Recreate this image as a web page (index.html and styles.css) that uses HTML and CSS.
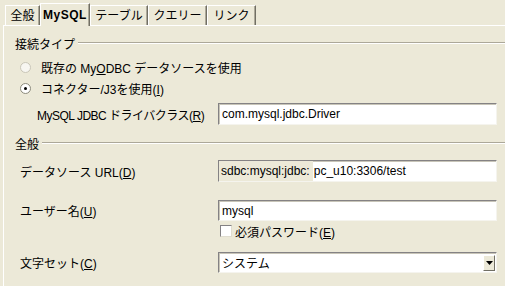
FILE: index.html
```html
<!DOCTYPE html>
<html lang="ja">
<head>
    <meta charset="UTF-8">
    <title>MySQL</title>
    <link rel="stylesheet" href="styles.css">
</head>
<body>

<div class="tabs">
    <div class="tab tab-general">全般</div>
    <div class="tab tab-mysql active">MySQL</div>
    <div class="tab tab-table">テーブル</div>
    <div class="tab tab-query">クエリー</div>
    <div class="tab tab-link">リンク</div>
</div>

<div class="panel">
    <div class="group-title first"><span>接続タイプ</span><div class="rule"></div></div>

    <div class="radio-row first-radio">
        <span class="radio off"></span>
        <span>既存の My<u>O</u>DBC データソースを使用</span>
    </div>
    <div class="radio-row">
        <span class="radio on"></span>
        <span>コネクター/J3を使用(<u>I</u>)</span>
    </div>

    <div class="field-row driver-row">
        <label class="label indent">MySQL JDBC ドライバクラス(<u>R</u>)</label>
        <div class="textbox">com.mysql.jdbc.Driver</div>
    </div>

    <div class="group-title second"><span>全般</span><div class="rule"></div></div>

    <div class="field-row url-row">
        <label class="label">データソース URL(<u>D</u>)</label>
        <div class="textbox url"><span class="prefix">sdbc:mysql:jdbc:</span><span class="rest">pc_u10:3306/test</span></div>
    </div>

    <div class="field-row user-row">
        <label class="label">ユーザー名(<u>U</u>)</label>
        <div class="textbox">mysql</div>
    </div>
    <div class="check-row">
        <span class="checkbox"></span>
        <span>必須パスワード(<u>E</u>)</span>
    </div>

    <div class="field-row charset-row">
        <label class="label">文字セット(<u>C</u>)</label>
        <div class="textbox select">
            <span class="value">システム</span>
            <span class="drop"><svg width="7" height="4" viewBox="0 0 7 4"><path d="M0 0h7L3.5 4z" fill="#000"/></svg></span>
        </div>
    </div>
</div>

</body>
</html>
```

FILE: styles.css
```css
body {
    margin: 0;
    background: #ece9d8;
    font-family: "Liberation Sans", "Noto Sans CJK JP", sans-serif;
    font-size: 12px;
    color: #000;
    overflow: hidden;
}
u {
    text-decoration: underline;
}

.tabs {
    display: flex;
    align-items: flex-end;
    height: 25px;
    padding-left: 5px;
}
.tab {
    height: 20px;
    line-height: 20px;
    text-align: center;
    white-space: nowrap;
    border-top: 1px solid #fff;
    border-left: 1px solid #fff;
    border-right: 1px solid #716f64;
    box-shadow: inset -1px 0 #aca899;
    box-sizing: border-box;
}
.tab-general { width: 35px; }
.tab-mysql { width: 50px; }
.tab-table { width: 58px; }
.tab-query { width: 59px; }
.tab-link { width: 49px; }
.tab.active {
    height: 23px;
    line-height: 22px;
    font-weight: bold;
    background: #ece9d8;
    margin-bottom: -1px;
    position: relative;
    z-index: 1;
    letter-spacing: 0.5px;
}

.panel {
    margin-left: 3px;
    border-top: 1px solid #fff;
    border-left: 1px solid #fff;
    padding: 9px 0 20px 11px;
}

.group-title {
    display: flex;
    align-items: center;
    height: 16px;
}
.group-title span {
    padding-right: 3px;
}
.group-title .rule {
    flex: 1;
    border-top: 1px solid #aca899;
    border-bottom: 1px solid #fff;
}
.group-title.second {
    margin-top: 10px;
}

.radio-row {
    display: flex;
    align-items: center;
    height: 20px;
    padding-left: 5px;
}
.radio-row.first-radio {
    margin-top: 6px;
    margin-bottom: 1px;
}
.radio {
    width: 11px;
    height: 11px;
    border-radius: 50%;
    background: #fff;
    margin-right: 10px;
    box-sizing: border-box;
    position: relative;
}
.radio.off {
    border: 1px solid #c9c6b8;
    background: #f7f6f1;
}
.radio.on {
    border: 1px solid #8c8a7c;
}
.radio.on::after {
    content: "";
    position: absolute;
    left: 3px;
    top: 3px;
    width: 3px;
    height: 3px;
    border-radius: 50%;
    background: #000;
}

.field-row {
    display: flex;
    align-items: center;
    height: 22px;
}
.label {
    width: 203px;
    padding-left: 5px;
    box-sizing: border-box;
    white-space: nowrap;
}
.label.indent {
    padding-left: 22px;
    letter-spacing: -0.5px;
}
.driver-row {
    margin-top: 5px;
}
.url-row {
    margin-top: 9px;
}
.user-row {
    margin-top: 18px;
    height: 21px;
}
.charset-row {
    margin-top: 14px;
    height: 21px;
}

.textbox {
    width: 279px;
    height: 100%;
    box-sizing: border-box;
    background: #fff;
    border-top: 1px solid #848284;
    border-left: 1px solid #848284;
    border-right: 1px solid #f5f4ee;
    border-bottom: 1px solid #f5f4ee;
    box-shadow: inset 1px 1px #c8c5b8;
    display: flex;
    align-items: center;
    padding-left: 3px;
    white-space: nowrap;
}
.textbox.url {
    padding-left: 0;
}
.prefix {
    background: #ece9d8;
    height: 100%;
    display: flex;
    align-items: center;
    padding: 0 3px 0 2px;
}
.rest {
    padding-left: 1px;
}

.check-row {
    display: flex;
    align-items: center;
    height: 14px;
    margin-top: 3px;
    padding-left: 205px;
}
.checkbox {
    width: 12px;
    height: 12px;
    background: #fff;
    box-sizing: border-box;
    border-top: 1px solid #848284;
    border-left: 1px solid #848284;
    border-right: 1px solid #e0ddd0;
    border-bottom: 1px solid #e0ddd0;
    margin-right: 3px;
}

.select {
    justify-content: space-between;
    padding-right: 1px;
}
.select .drop {
    width: 12px;
    height: 16px;
    background: #ece9d8;
    border-top: 1px solid #fff;
    border-left: 1px solid #fff;
    border-right: 1px solid #716f64;
    border-bottom: 1px solid #716f64;
    box-sizing: border-box;
    display: flex;
    align-items: center;
    justify-content: center;
}
```
